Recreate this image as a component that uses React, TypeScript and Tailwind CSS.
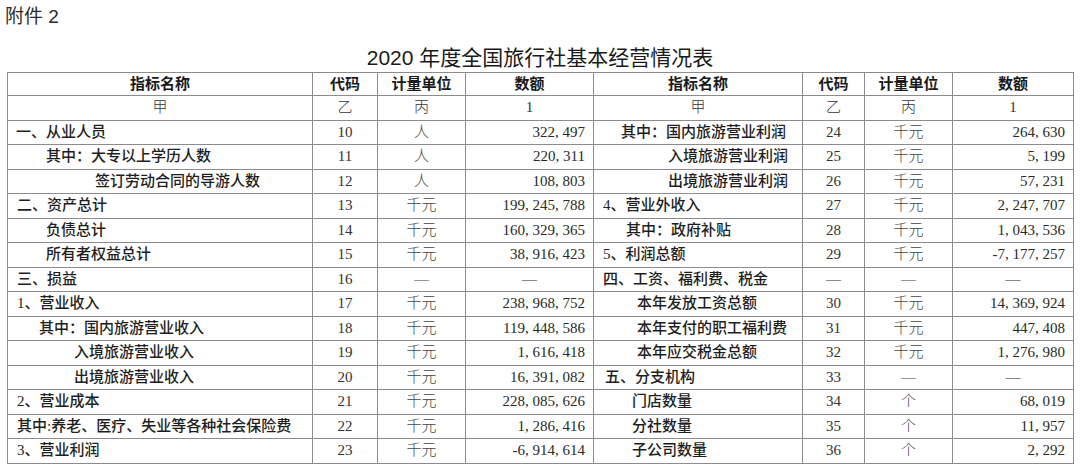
const cell = 'border border-[#8c8c8c] p-0 leading-none whitespace-nowrap'

type Row = {
  name: string
  pad: string
  code: string
  unit: string
  amount: string
}

const leftRows: Row[] = [
  { name: '一、从业人员', pad: 'pl-[8px]', code: '10', unit: '人', amount: '322, 497' },
  { name: '其中：大专以上学历人数', pad: 'pl-[38px]', code: '11', unit: '人', amount: '220, 311' },
  { name: '签订劳动合同的导游人数', pad: 'pl-[87px]', code: '12', unit: '人', amount: '108, 803' },
  { name: '二、资产总计', pad: 'pl-[9px]', code: '13', unit: '千元', amount: '199, 245, 788' },
  { name: '负债总计', pad: 'pl-[38px]', code: '14', unit: '千元', amount: '160, 329, 365' },
  { name: '所有者权益总计', pad: 'pl-[38px]', code: '15', unit: '千元', amount: '38, 916, 423' },
  { name: '三、损益', pad: 'pl-[9px]', code: '16', unit: '—', amount: '—' },
  { name: '1、营业收入', pad: 'pl-[9px]', code: '17', unit: '千元', amount: '238, 968, 752' },
  { name: '其中：国内旅游营业收入', pad: 'pl-[31px]', code: '18', unit: '千元', amount: '119, 448, 586' },
  { name: '入境旅游营业收入', pad: 'pl-[66px]', code: '19', unit: '千元', amount: '1, 616, 418' },
  { name: '出境旅游营业收入', pad: 'pl-[66px]', code: '20', unit: '千元', amount: '16, 391, 082' },
  { name: '2、营业成本', pad: 'pl-[9px]', code: '21', unit: '千元', amount: '228, 085, 626' },
  { name: '其中:养老、医疗、失业等各种社会保险费', pad: 'pl-[9px]', code: '22', unit: '千元', amount: '1, 286, 416' },
  { name: '3、营业利润', pad: 'pl-[9px]', code: '23', unit: '千元', amount: '-6, 914, 614' },
]

const rightRows: Row[] = [
  { name: '其中：国内旅游营业利润', pad: 'pl-[27px]', code: '24', unit: '千元', amount: '264, 630' },
  { name: '入境旅游营业利润', pad: 'pl-[74px]', code: '25', unit: '千元', amount: '5, 199' },
  { name: '出境旅游营业利润', pad: 'pl-[74px]', code: '26', unit: '千元', amount: '57, 231' },
  { name: '4、营业外收入', pad: 'pl-[9px]', code: '27', unit: '千元', amount: '2, 247, 707' },
  { name: '其中：政府补贴', pad: 'pl-[32px]', code: '28', unit: '千元', amount: '1, 043, 536' },
  { name: '5、利润总额', pad: 'pl-[9px]', code: '29', unit: '千元', amount: '-7, 177, 257' },
  { name: '四、工资、福利费、税金', pad: 'pl-[9px]', code: '—', unit: '—', amount: '—' },
  { name: '本年发放工资总额', pad: 'pl-[43px]', code: '30', unit: '千元', amount: '14, 369, 924' },
  { name: '本年支付的职工福利费', pad: 'pl-[43px]', code: '31', unit: '千元', amount: '447, 408' },
  { name: '本年应交税金总额', pad: 'pl-[43px]', code: '32', unit: '千元', amount: '1, 276, 980' },
  { name: '五、分支机构', pad: 'pl-[11px]', code: '33', unit: '—', amount: '—' },
  { name: '门店数量', pad: 'pl-[38px]', code: '34', unit: '个', amount: '68, 019' },
  { name: '分社数量', pad: 'pl-[38px]', code: '35', unit: '个', amount: '11, 957' },
  { name: '子公司数量', pad: 'pl-[38px]', code: '36', unit: '个', amount: '2, 292' },
]

function Half({ row }: { row: Row }) {
  const dash = row.amount === '—'
  return (
    <>
      <td className={`${cell} ${row.pad} font-medium text-[#1e1e1e]`}>{row.name}</td>
      <td className={`${cell} text-center text-[#333]`}>{row.code}</td>
      <td className={`${cell} text-center text-[#444] font-light`}>{row.unit}</td>
      <td className={`${cell} text-[#2a2a2a] ${dash ? 'text-center font-light' : 'text-right pr-[8px]'}`}>
        {row.amount}
      </td>
    </>
  )
}

export default function App() {
  return (
    <div className="w-[1080px] h-[474px] bg-white text-[#1a1a1a] overflow-hidden">
      <div className="pl-[5px] pt-[4px] text-[19px] leading-[26px] text-[#2b2b2b] font-['Liberation_Sans','Noto_Sans_CJK_SC',sans-serif]">
        附件 2
      </div>
      <h1 className="mt-[14px] text-center text-[21px] leading-[28px] font-normal text-[#1a1a1a] font-['Liberation_Sans','Noto_Sans_CJK_SC',sans-serif]">
        2020 年度全国旅行社基本经营情况表
      </h1>

      <table className="ml-[7px] w-[1066px] table-fixed border-collapse border border-[#6f6f6f] text-[15px] font-['Liberation_Serif','Noto_Sans_CJK_SC',serif]">
        <colgroup>
          <col className="w-[305px]" />
          <col className="w-[65px]" />
          <col className="w-[88px]" />
          <col className="w-[128px]" />
          <col className="w-[209px]" />
          <col className="w-[62px]" />
          <col className="w-[88px]" />
          <col className="w-[121px]" />
        </colgroup>
        <thead>
          <tr className="h-[23px] font-bold text-[#1a1a1a]">
            {[0, 1].map((i) => (
              <Header key={i} />
            ))}
          </tr>
        </thead>
        <tbody>
          <tr className="h-[24.5px] text-[#333] font-light">
            {[0, 1].map((i) => (
              <Letters key={i} />
            ))}
          </tr>
          {leftRows.map((row, i) => (
            <tr key={row.code} className="h-[24.5px]">
              <Half row={row} />
              <Half row={rightRows[i]} />
            </tr>
          ))}
        </tbody>
      </table>
    </div>
  )
}

function Header() {
  return (
    <>
      <th className={`${cell} text-center font-bold`}>指标名称</th>
      <th className={`${cell} text-center font-bold`}>代码</th>
      <th className={`${cell} text-center font-bold`}>计量单位</th>
      <th className={`${cell} text-center font-bold`}>数额</th>
    </>
  )
}

function Letters() {
  return (
    <>
      <td className={`${cell} text-center`}>甲</td>
      <td className={`${cell} text-center`}>乙</td>
      <td className={`${cell} text-center`}>丙</td>
      <td className={`${cell} text-center`}>1</td>
    </>
  )
}
